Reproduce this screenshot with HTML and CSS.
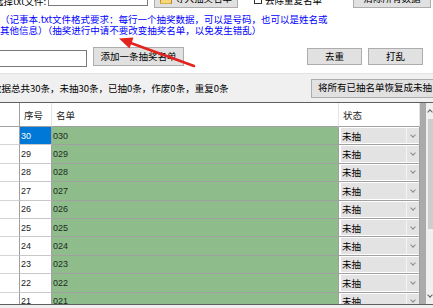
FILE: index.html
```html
<!DOCTYPE html>
<html lang="zh-CN">

<head>
  <meta charset="UTF-8">
  <meta name="viewport" content="width=device-width, initial-scale=1.0">
  <link rel="stylesheet" href="styles.css">
  <title>抽奖名单</title>
</head>

<body>

  <div class="top">
    <div class="file-row">
      <span class="file-label">选择txt文件:</span>
      <input type="text" class="file-input">
      <button class="btn btn-import">
        <svg class="folder" width="12" height="10" viewBox="0 0 12 10">
          <path d="M0.5 1.5h4l1 1h6v7h-11z" fill="#e8b84a" stroke="#b98a22" stroke-width="1"/>
          <path d="M1.5 4h10l-1 5.5h-10z" fill="#f8d77a"/>
        </svg>导入抽奖名单</button>
      <label class="check"><span class="box"></span>去除重复名单</label>
      <button class="btn btn-clear">清除所有数据</button>
    </div>

    <p class="note">（记事本.txt文件格式要求：每行一个抽奖数据，可以是号码，也可以是姓名或<br>其他信息）（抽奖进行中请不要改变抽奖名单，以免发生错乱）</p>

    <div class="add-row">
      <input type="text" class="add-input">
      <button class="btn btn-add">添加一条抽奖名单</button>
      <button class="btn btn-small btn-dedupe">去重</button>
      <button class="btn btn-small">打乱</button>
    </div>

    <!-- red hint arrow drawn over the panel -->
    <svg class="arrow" width="433" height="80" viewBox="0 0 433 80">
      <line x1="194" y1="66" x2="128" y2="42" stroke="#e3241e" stroke-width="2.6" stroke-linecap="round"/>
      <polygon points="119,38.5 133.5,37.5 129.5,48.5" fill="#e3241e"/>
    </svg>
  </div>

  <div class="status">
    <span class="status-text">数据总共30条，未抽30条，已抽0条，作废0条，重复0条</span>
    <button class="btn btn-reset">将所有已抽名单恢复成未抽</button>
  </div>

  <div class="grid-wrap">
    <div class="grid">
      <div class="row header">
        <div class="cell"></div>
        <div class="cell">序号</div>
        <div class="cell">名单</div>
        <div class="cell">状态</div>
      </div>
      <div class="row">
        <div class="cell side"></div>
        <div class="cell num selected">30</div>
        <div class="cell name">030</div>
        <div class="cell state"><div class="combo"><span>未抽</span><span class="drop"></span></div></div>
      </div>
      <div class="row">
        <div class="cell side"></div>
        <div class="cell num">29</div>
        <div class="cell name">029</div>
        <div class="cell state"><div class="combo"><span>未抽</span><span class="drop"></span></div></div>
      </div>
      <div class="row">
        <div class="cell side"></div>
        <div class="cell num">28</div>
        <div class="cell name">028</div>
        <div class="cell state"><div class="combo"><span>未抽</span><span class="drop"></span></div></div>
      </div>
      <div class="row">
        <div class="cell side"></div>
        <div class="cell num">27</div>
        <div class="cell name">027</div>
        <div class="cell state"><div class="combo"><span>未抽</span><span class="drop"></span></div></div>
      </div>
      <div class="row">
        <div class="cell side"></div>
        <div class="cell num">26</div>
        <div class="cell name">026</div>
        <div class="cell state"><div class="combo"><span>未抽</span><span class="drop"></span></div></div>
      </div>
      <div class="row">
        <div class="cell side"></div>
        <div class="cell num">25</div>
        <div class="cell name">025</div>
        <div class="cell state"><div class="combo"><span>未抽</span><span class="drop"></span></div></div>
      </div>
      <div class="row">
        <div class="cell side"></div>
        <div class="cell num">24</div>
        <div class="cell name">024</div>
        <div class="cell state"><div class="combo"><span>未抽</span><span class="drop"></span></div></div>
      </div>
      <div class="row">
        <div class="cell side"></div>
        <div class="cell num">23</div>
        <div class="cell name">023</div>
        <div class="cell state"><div class="combo"><span>未抽</span><span class="drop"></span></div></div>
      </div>
      <div class="row">
        <div class="cell side"></div>
        <div class="cell num">22</div>
        <div class="cell name">022</div>
        <div class="cell state"><div class="combo"><span>未抽</span><span class="drop"></span></div></div>
      </div>
      <div class="row">
        <div class="cell side"></div>
        <div class="cell num">21</div>
        <div class="cell name">021</div>
        <div class="cell state"><div class="combo"><span>未抽</span><span class="drop"></span></div></div>
      </div>
    </div>
    <div class="gap"></div>
    <div class="scrollbar">
      <span class="sb-arrow sb-up"></span>
      <span class="sb-thumb"></span>
      <span class="sb-arrow sb-down"></span>
    </div>
  </div>

</body>

</html>
```

FILE: styles.css
```css
html,
body {
  width: 433px;
  height: 308px;
  overflow: hidden;
}

body {
  margin: 0;
  background-color: #f0f0f0;
  font-family: "Noto Sans CJK SC", "Liberation Sans", sans-serif;
  font-size: 9.5px;
  color: #000;
}

.btn {
  box-sizing: border-box;
  margin: 0;
  padding: 0;
  background-color: #e1e1e1;
  border: 1px solid #adadad;
  font-family: inherit;
  font-size: 9.5px;
  line-height: 1;
  color: #000;
}

input {
  box-sizing: border-box;
  margin: 0;
  border: 1px solid #7a7a7a;
  background-color: #fff;
}

/* top panel */
.top {
  position: relative;
  display: flow-root;
  box-sizing: border-box;
  height: 74px;
  background-color: #fff;
  border-bottom: 1px solid #e3e3e3;
}

.file-row {
  display: flex;
  align-items: flex-end;
  height: 18px;
  margin-top: -10px;
}

.file-label {
  margin-left: -6px;
  line-height: 14px;
}

.file-input {
  width: 100px;
  height: 16px;
  margin-left: 2px;
  margin-bottom: 2px;
}

.btn-import {
  display: flex;
  align-items: center;
  width: 84px;
  height: 18px;
  margin-left: 6px;
  padding-left: 5px;
}

.folder {
  margin-right: 3px;
}

.check {
  display: flex;
  align-items: center;
  margin-left: 16px;
  margin-bottom: 2px;
  line-height: 12px;
}

.box {
  box-sizing: border-box;
  width: 8px;
  height: 8px;
  margin-right: 3px;
  border: 1px solid #333;
  background-color: #fff;
}

.btn-clear {
  width: 78px;
  height: 18px;
  margin-left: auto;
  margin-right: 2px;
}

.note {
  margin: 6px 0 0;
  line-height: 10.5px;
  color: #0000ff;
  white-space: nowrap;
}

.add-row {
  display: flex;
  align-items: flex-start;
  height: 20px;
  margin-top: 12px;
  padding-right: 10px;
}

.add-input {
  width: 89px;
  height: 17px;
  margin-left: -2px;
  margin-top: 3px;
}

.btn-add {
  width: 91px;
  height: 19px;
  margin-left: 6px;
}

.btn-small {
  width: 55px;
  height: 17px;
  margin-top: 1px;
  margin-left: 6px;
}

.btn-dedupe {
  margin-left: auto;
}

.arrow {
  position: absolute;
  top: 0;
  left: 0;
  pointer-events: none;
}

/* counters */
.status {
  display: flex;
  align-items: center;
  height: 28px;
}

.status-text {
  margin-left: -8px;
  white-space: nowrap;
}

.btn-reset {
  flex-shrink: 0;
  width: 132px;
  height: 19px;
  margin-left: auto;
  margin-right: -10px;
  padding-left: 6px;
  text-align: left;
}

/* data grid */
.grid-wrap {
  display: flex;
  box-sizing: border-box;
  height: 203px;
  overflow: hidden;
  background-color: #ababab;
  border-top: 1px solid #5f5f5f;
  border-bottom: 1px solid #5f5f5f;
}

.grid {
  flex-shrink: 0;
  width: 420px;
}

.row {
  display: grid;
  grid-template-columns: 20px 32px 287px 81px;
  box-sizing: border-box;
  height: 18.4px;
}

.cell {
  box-sizing: border-box;
  display: flex;
  align-items: center;
  overflow: hidden;
  border-right: 1px solid #a0a0a0;
  border-bottom: 1px solid #a0a0a0;
  font-family: "Liberation Sans", "Noto Sans CJK SC", sans-serif;
  font-size: 9px;
  white-space: nowrap;
}

.header {
  height: 24px;
}

.header .cell {
  background-color: #fff;
  border-right-color: #e5e5e5;
  border-bottom-color: #a0a0a0;
  padding-left: 4px;
  font-family: "Noto Sans CJK SC", sans-serif;
  font-size: 9.5px;
  color: #222;
}

.header .cell:first-child {
  border-right-color: #a0a0a0;
}

.side {
  background-color: #fff;
  border-bottom-color: #d4d4d4;
}

.num {
  padding-left: 1px;
  background-color: #fff;
  border-bottom-color: #c8c8c8;
  color: #222;
}

.selected {
  background-color: #0078d7;
  color: #fff;
}

.name {
  padding-left: 1px;
  background-color: #8fbc8b;
  color: #1d2b1c;
}

.state {
  padding: 1px 0 1px 2px;
  background-color: #fff;
}

.combo {
  display: flex;
  align-items: center;
  width: 100%;
  height: 100%;
  background-color: #e3e3e3;
  font-family: "Noto Sans CJK SC", sans-serif;
  font-size: 9.5px;
}

.combo span:first-child {
  padding-left: 1px;
}

.drop {
  display: flex;
  align-items: center;
  justify-content: center;
  align-self: stretch;
  width: 12px;
  margin-left: auto;
  border-left: 1px solid #f4f4f4;
}

.drop::after {
  content: "";
  width: 3px;
  height: 3px;
  margin-top: -2px;
  border-right: 1px solid #8a8a8a;
  border-bottom: 1px solid #8a8a8a;
  transform: rotate(45deg);
}

.gap {
  flex-shrink: 0;
  width: 6px;
}

.scrollbar {
  flex-shrink: 0;
  display: flex;
  flex-direction: column;
  width: 14px;
  background-color: #f0f0f0;
}

.sb-arrow {
  display: flex;
  justify-content: center;
  align-items: center;
  width: 8px;
  height: 16px;
}

.sb-arrow::after {
  content: "";
  width: 3px;
  height: 3px;
  border-left: 1px solid #606060;
  border-top: 1px solid #606060;
}

.sb-up::after {
  margin-top: 2px;
  transform: rotate(45deg);
}

.sb-down {
  margin-top: auto;
}

.sb-down::after {
  margin-top: -3px;
  transform: rotate(225deg);
}

.sb-thumb {
  width: 12px;
  height: 110px;
  margin-left: 2px;
  background-color: #cdcdcd;
}
```
